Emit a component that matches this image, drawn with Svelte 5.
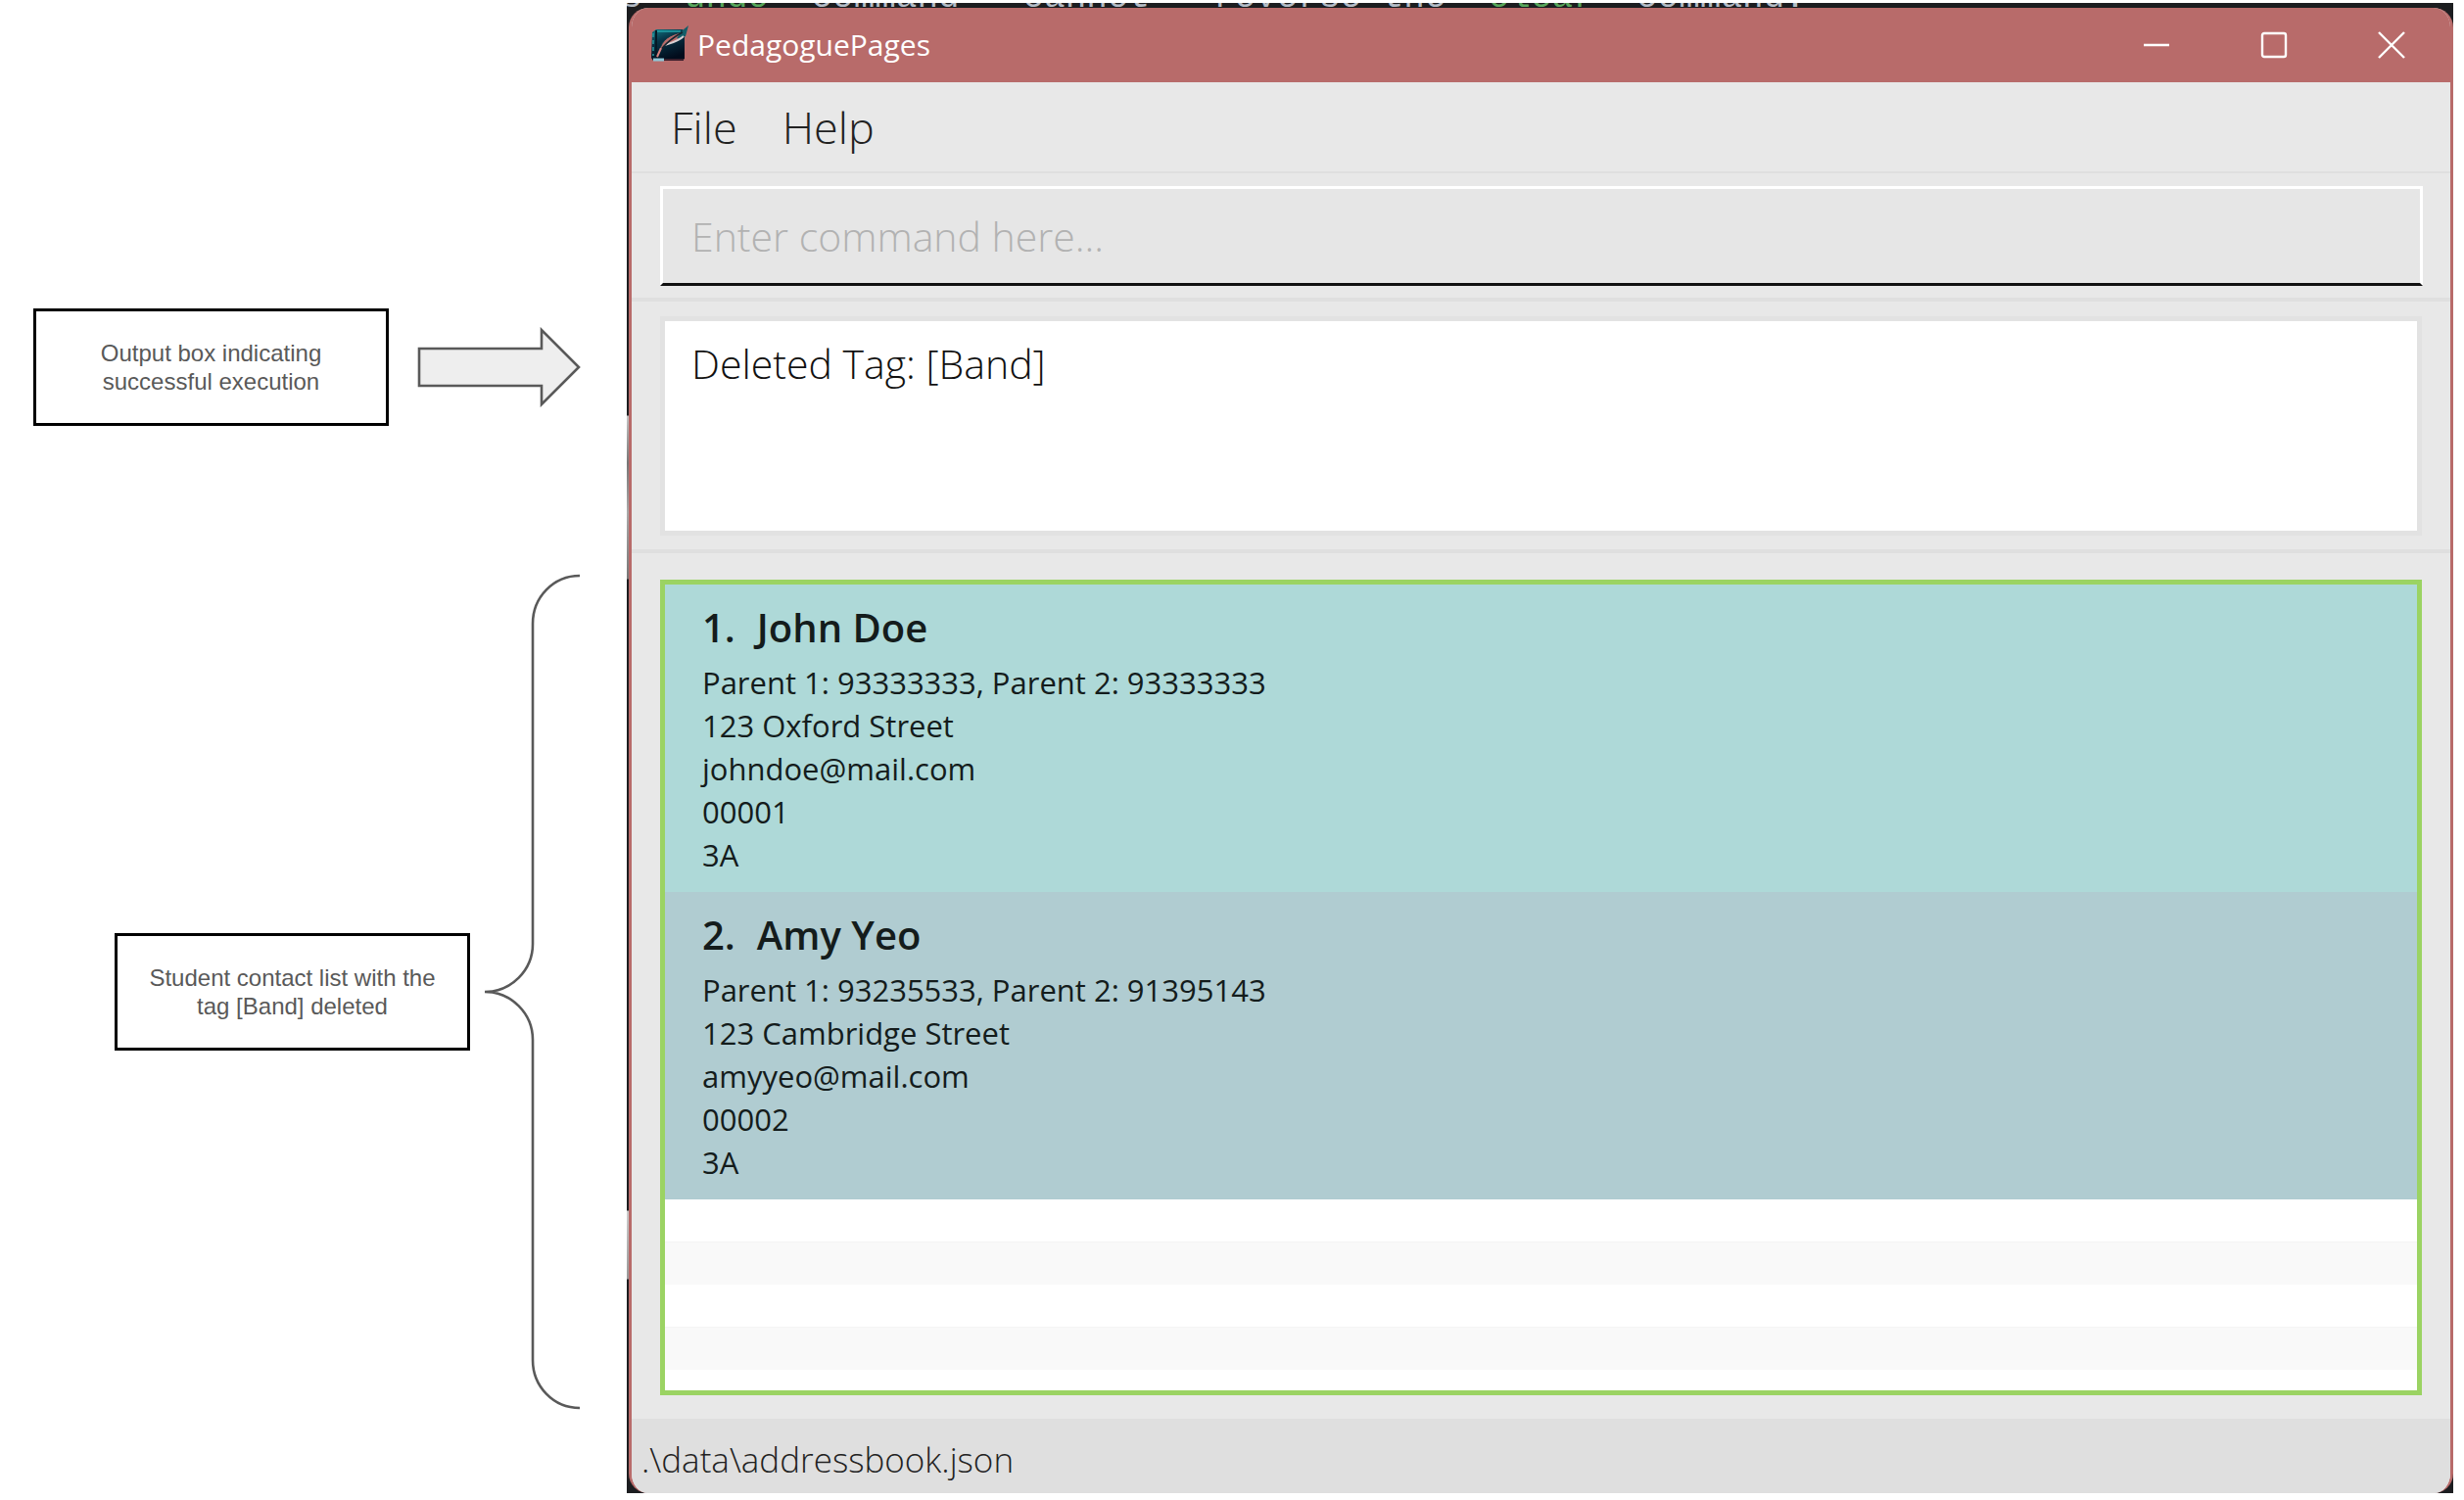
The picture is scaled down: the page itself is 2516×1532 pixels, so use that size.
<script>
  const students = [
    {
      name: 'John Doe',
      lines: ['Parent 1: 93333333, Parent 2: 93333333', '123 Oxford Street', 'johndoe@mail.com', '00001', '3A'],
    },
    {
      name: 'Amy Yeo',
      lines: ['Parent 1: 93235533, Parent 2: 91395143', '123 Cambridge Street', 'amyyeo@mail.com', '00002', '3A'],
    },
  ];
  const result = 'Deleted Tag: [Band]';
  let command = $state('');
</script>

<div class="page">
  <aside class="notes">
    <div class="note-row output-note">
      <p class="note">Output box indicating successful execution</p>
      <svg class="arrow" width="168" height="82" viewBox="0 0 168 82" aria-hidden="true">
        <path d="M2 22H127V3L165 41L127 79V60H2Z" fill="#eeeeee" stroke="#595959" stroke-width="2.6" />
      </svg>
    </div>
    <div class="note-row list-note">
      <p class="note">Student contact list with the tag [Band] deleted</p>
      <svg class="brace" width="100" height="854" viewBox="0 0 100 854" aria-hidden="true">
        <path
          d="M98 2C71 2 50 24 50 51V378C50 405 28 427 1 427C28 427 50 449 50 476V803C50 830 71 852 98 852"
          fill="none"
          stroke="#595959"
          stroke-width="2.6"
        />
      </svg>
    </div>
  </aside>

  <main class="desktop">
    <div class="editor-line" aria-hidden="true">
      <span>s `<b>undo</b>` command **cannot** reverse the `<b>clear</b>` command.</span>
    </div>
    <div class="window">
      <header class="titlebar">
        <svg class="logo" width="40" height="40" viewBox="0 0 40 40" aria-hidden="true">
          <defs>
            <linearGradient id="cover" x1="0" y1="0" x2="0.4" y2="1">
              <stop offset="0" stop-color="#127a86" />
              <stop offset="0.4" stop-color="#073447" />
              <stop offset="1" stop-color="#020c1c" />
            </linearGradient>
          </defs>
          <path d="M2 7L6 4H33L35 7V34L32 36H3L1 33Z" fill="url(#cover)" />
          <path d="M6 5V33" stroke="#041a26" stroke-width="2" />
          <path d="M3 8V31" stroke="#2a98a0" stroke-width="1.5" stroke-dasharray="4 3" />
          <path d="M7 6H31" stroke="#25a5aa" stroke-width="1.5" />
          <path d="M3 35H14" stroke="#8fc6d6" stroke-width="3" />
          <path d="M14 35H34" stroke="#3c1f2c" stroke-width="2" />
          <path d="M10 25C11 15 21 9 32 7L37 3L35 10C31 15 24 18 16 19Z" fill="#b86b6a" stroke="#0d3a46" stroke-width="1" />
          <path d="M39 0L36 11L30 14L27 13L33 5Z" fill="#145e69" />
          <path d="M15 20C21 18 29 16 34 11" fill="none" stroke="#d8cfd2" stroke-width="2" />
          <path d="M7 32C11 22 20 14 33 7" fill="none" stroke="#16242f" stroke-width="1.5" />
          <path d="M7 32L11 23" stroke="#d98280" stroke-width="2" />
        </svg>
        <h1>PedagoguePages</h1>
        <div class="caption">
          <button type="button" aria-label="Minimize">
            <svg width="28" height="28" viewBox="0 0 28 28"><path d="M1 14H27" /></svg>
          </button>
          <button type="button" aria-label="Maximize">
            <svg width="28" height="28" viewBox="0 0 28 28"><rect x="2" y="2" width="24" height="24" rx="2" /></svg>
          </button>
          <button type="button" aria-label="Close">
            <svg width="28" height="28" viewBox="0 0 28 28"><path d="M1 1L27 27M27 1L1 27" /></svg>
          </button>
        </div>
      </header>

      <nav class="menu">
        <button type="button">File</button>
        <button type="button">Help</button>
      </nav>

      <section class="command">
        <input type="text" aria-label="Command" placeholder="Enter command here..." bind:value={command} />
      </section>

      <section class="output">
        <textarea aria-label="Result" readonly value={result}></textarea>
      </section>

      <section class="contacts">
        <div class="list">
          <ol>
            {#each students as student, i}
              <li>
                <h2><span>{i + 1}.</span><span>{student.name}</span></h2>
                {#each student.lines as line}
                  <p>{line}</p>
                {/each}
              </li>
            {/each}
          </ol>
          <div class="empty-rows"></div>
        </div>
      </section>

      <footer class="status">.\data\addressbook.json</footer>
    </div>
  </main>
</div>

<style>
  :global(body) {
    background: #fff;
  }

  .page {
    box-sizing: border-box;
    display: flex;
    min-height: 100vh;
    padding: 3px 11px 7px 0;
    font-family: 'Open Sans', 'Noto Sans', sans-serif;
  }

  .notes {
    box-sizing: border-box;
    flex: 0 0 640px;
    display: flex;
    flex-direction: column;
    gap: 151px;
    padding: 312px 46px 0 0;
    font-family: 'Liberation Sans', Arial, sans-serif;
  }

  .note-row {
    display: flex;
    align-items: center;
    justify-content: flex-end;
  }

  .output-note {
    gap: 29px;
  }

  .list-note {
    gap: 14px;
  }

  .note {
    box-sizing: border-box;
    width: 363px;
    min-height: 120px;
    margin: 0;
    padding: 28px 30px;
    border: 3px solid #000;
    color: #595959;
    font-size: 24px;
    line-height: 29px;
    text-align: center;
  }

  .desktop {
    box-sizing: border-box;
    flex: 1;
    min-width: 0;
    display: flex;
    flex-direction: column;
    padding-left: 2px;
    background: linear-gradient(
      #1c1d20 421px,
      #c4c4c4 422px,
      #777 470px,
      #aaa 520px,
      #777 588px,
      #1c1d20 589px,
      #1c1d20 1233px,
      #ccc 1234px,
      #999 1303px,
      #1c1d20 1304px
    );
  }

  .editor-line {
    display: flex;
    align-items: flex-end;
    height: 5px;
    margin-left: -2px;
    overflow: hidden;
    background: #1c1d20;
    color: #b4bcc6;
    font-family: 'Liberation Mono', monospace;
    font-size: 36px;
    line-height: 36px;
    white-space: pre;
  }

  .editor-line span {
    margin: 0 0 -8px -6px;
  }

  .editor-line b {
    color: #58a65c;
    font-weight: 400;
  }

  .window {
    flex: 1;
    display: flex;
    flex-direction: column;
    border: solid #b86b6a;
    border-width: 0 3px;
    border-radius: 20px;
    overflow: hidden;
    background: #e8e8e8;
  }

  .titlebar {
    display: flex;
    align-items: center;
    height: 76px;
    padding-left: 19px;
    background: #b86b6a;
    color: #fff;
  }

  .titlebar h1 {
    flex: 1;
    margin: 0 0 0 8px;
    font-size: 30px;
    font-weight: 400;
    line-height: 40px;
  }

  .caption {
    display: flex;
  }

  .caption button {
    display: grid;
    place-items: center;
    width: 120px;
    height: 76px;
    padding: 0;
    border: 0;
    background: none;
  }

  .caption svg {
    fill: none;
    stroke: #fff;
    stroke-width: 2.4;
  }

  .menu {
    display: flex;
    align-items: center;
    gap: 46px;
    height: 91px;
    padding-left: 40px;
    border-bottom: 2px solid #dfdfdf;
  }

  .menu button {
    padding: 0;
    border: 0;
    background: none;
    color: #222;
    font: 300 45px/60px 'Open Sans', 'Noto Sans', sans-serif;
  }

  .command,
  .output {
    padding: 13px 28px 12px 29px;
    border-bottom: 4px solid #dfdfdf;
  }

  .command input {
    box-sizing: border-box;
    display: block;
    width: 100%;
    height: 102px;
    padding: 0 29px;
    border: 3px solid #fff;
    border-bottom-color: #111;
    border-radius: 0;
    outline: 0;
    background: #e6e6e6;
    color: #222;
    font: 300 41px/56px 'Open Sans', 'Noto Sans', sans-serif;
  }

  .command input::placeholder {
    color: #b2b2b2;
    opacity: 1;
  }

  .output {
    padding: 15px 29px 14px;
  }

  .output textarea {
    box-sizing: border-box;
    display: block;
    width: 100%;
    height: 224px;
    padding: 15px 27px;
    border: 5px solid #e2e2e2;
    outline: 0;
    resize: none;
    background: #fff;
    color: #111;
    font: 300 41px/56px 'Open Sans', 'Noto Sans', sans-serif;
  }

  .contacts {
    flex: 1;
    display: flex;
    padding: 27px 29px 24px;
  }

  .list {
    flex: 1;
    display: flex;
    flex-direction: column;
    border: 5px solid #9bd363;
    background: #fff;
  }

  .list ol {
    margin: 0;
    padding: 0;
    list-style: none;
  }

  .list li {
    padding: 13px 38px 16px;
    background: #aed9d8;
    color: #141c1c;
  }

  .list li:nth-child(even) {
    background: #b0ccd1;
  }

  .list h2 {
    display: flex;
    gap: 22px;
    margin: 0 0 3px;
    font-size: 40px;
    font-weight: 600;
    line-height: 62px;
  }

  .list p {
    margin: 0;
    font-size: 31px;
    line-height: 44px;
  }

  .empty-rows {
    flex: 1;
    background: repeating-linear-gradient(#fff 0 43px, #f4f4f4 43px 44px, #f9f9f9 44px 87px);
  }

  .status {
    height: 76px;
    padding-left: 10px;
    background: #dfdfdf;
    color: #222;
    font-size: 35px;
    font-weight: 300;
    line-height: 84px;
  }
</style>
